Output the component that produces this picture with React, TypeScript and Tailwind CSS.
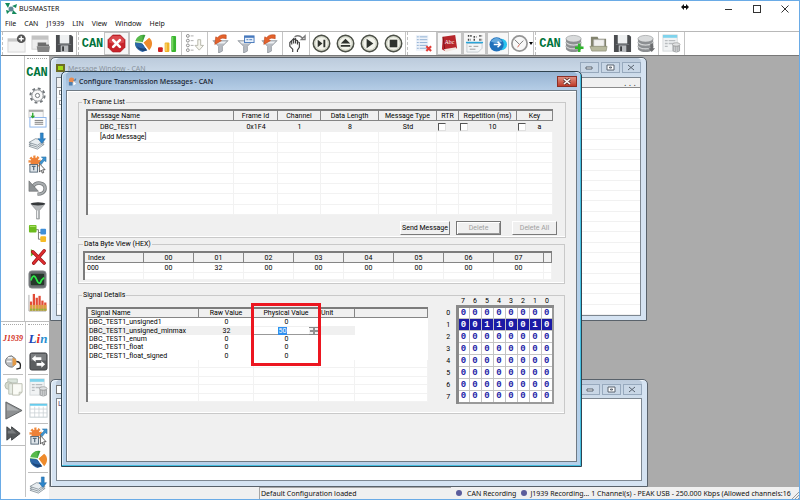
import type { ReactNode } from "react";

type IconProps = { children: ReactNode; box?: string };

const Icon = ({ children, box = "0 0 20 20" }: IconProps) => (
  <svg viewBox={box} className="h-[19px] w-[19px] shrink-0" fill="none" aria-hidden="true">
    {children}
  </svg>
);

const CanLogo = () => (
  <span className="font-['Liberation_Mono',monospace] text-[12px] leading-[20px] font-black text-[#00743c]">
    CAN
  </span>
);

const NewIcon = () => (
  <Icon>
    <rect x="1" y="5" width="18" height="14" fill="#f4f4f4" stroke="#d5d5d5" />
    <path d="M1 5h18v3H1z" fill="#c9c9c9" />
    <circle cx="15" cy="5" r="4.6" fill="#555" />
    <path d="M15 2.4v5.2M12.4 5h5.2" stroke="#fff" strokeWidth="1.5" />
  </Icon>
);

const OpenIcon = () => (
  <Icon>
    <rect x="1" y="2" width="17" height="14" fill="#ededed" stroke="#d0d0d0" />
    <path d="M1 2h17v4H1z" fill="#c3c3c3" />
    <path d="M7 9h9v2h3v2H7z" fill="#6d6d6d" />
    <path d="M6 13h14l-1 6H7z" fill="#858585" />
  </Icon>
);

const SaveIcon = () => (
  <Icon>
    <path d="M1 1h16l2 2v16H1z" fill="#4b4d50" />
    <path d="M5 1h10v9H5z" fill="#eef0f1" />
    <path d="M6 12h8v7H6z" fill="#b9bcbf" />
    <path d="M7.500 13h2v5h-2z" fill="#3b3d40" />
    <path d="M3 11h14" stroke="#74777a" />
  </Icon>
);

const StopIcon = () => (
  <Icon>
    <path d="M6 1h8l5 5v8l-5 5H6l-5-5V6z" fill="#c8242b" stroke="#a3161c" strokeWidth=".6" />
    <path d="M6 2h8l4 4v3c-5 2-11 2-16 0V6z" fill="#e35a5e" opacity=".7" />
    <path d="M6.500 6.500l7 7M13.500 6.500l-7 7" stroke="#fff" strokeWidth="2.800" strokeLinecap="round" />
  </Icon>
);

const PieIcon = () => (
  <Icon>
    <path d="M9 9L3 15a9 9 0 0 1 9-14z" fill="#3a9f39" />
    <path d="M9 9V1A9 9 0 0 0 1 10z" fill="#58bb4c" />
    <path d="M9 10L1 9c0 4 2 8 8 10l5-2z" fill="#2c66a8" />
    <path d="M3 13c2 4 6 6 11 4l-1-2c-4 1-7 0-10-2z" fill="#1b4476" />
    <path d="M10 9l6-5c4 3 4 9 0 13z" fill="#ee8b2c" />
    <path d="M9 9l7-6M9 9l6 9M9 9L1 8" stroke="#fff" />
  </Icon>
);

const BarsIcon = () => (
  <Icon>
    <rect x="0" y="14" width="5" height="5" rx="1" fill="#cf2020" />
    <rect x="7" y="9" width="5" height="10" rx="1" fill="#f0b429" />
    <rect x="14" y="2" width="5" height="17" rx="1" fill="#39b52f" />
    <path d="M15.500 3v14" stroke="#8be070" />
    <path d="M8.500 10v8" stroke="#ffe08a" />
  </Icon>
);

const ListArrowIcon = () => (
  <Icon>
    {[2, 7, 12, 17].map((y) => (
      <g key={y}>
        <circle cx="3" cy={y} r="1.500" stroke="#888" />
        <path d={`M6 ${y}h3`} stroke="#aaa" />
      </g>
    ))}
    <path d="M13.500 6h3v6h3l-4.500 5-4.500-5h3z" fill="#f6f6ee" stroke="#b5b5aa" />
  </Icon>
);

const FunnelShape = () => (
  <>
    <path d="M2 7h16l-6 6v5l-4 2v-7z" fill="#b7bcc3" stroke="#858b93" strokeWidth=".7" />
    <path d="M4 8h12l-2 2H6z" fill="#edf0f3" />
  </>
);

const FilterRunIcon = () => (
  <Icon>
    <FunnelShape />
    <path d="M16 1c-5-1-8 1-9 3L5 3l-1 8 7-4-2-1c2-2 4-2 7-1z" fill="#e5622b" stroke="#b84318" strokeWidth=".6" />
  </Icon>
);

const FilterConfigIcon = () => (
  <Icon>
    <FunnelShape />
    <rect x="9" y="2" width="10" height="7" fill="#e9f1fb" stroke="#4779bd" />
    <path d="M9 2h10v2H9z" fill="#4779bd" />
    <path d="M11 6h2m1 0h3" stroke="#4779bd" />
  </Icon>
);

const HandIcon = () => (
  <Icon>
    <path
      d="M6 19v-3l-3-3V9l2-2v4V7l2-2v5V6l2-1v5V6l2 1v4V8l2 1v5l-2 3v2"
      fill="#fff"
      stroke="#3d3d3d"
      strokeWidth="1.200"
    />
    <path d="M8 3c3-2 6-1 8 1M19 2v4h-4z" stroke="#777" strokeWidth="1.400" />
  </Icon>
);

const RoundButton = ({ d }: { d: string }) => (
  <Icon>
    <circle cx="10" cy="10" r="8.600" fill="#f3f4ec" stroke="#4d5148" strokeWidth="1.700" />
    <circle cx="10" cy="10" r="7" stroke="#c5c9b8" strokeWidth=".8" />
    <path d={d} fill="#2f332e" />
  </Icon>
);

const ClearListIcon = () => (
  <Icon>
    <rect x="2" y="1" width="13" height="17" fill="#eef3fa" />
    {[3, 6, 9, 12, 15].map((y) => (
      <path key={y} d={`M3 ${y}h2m1 0h8`} stroke="#8eaed2" />
    ))}
    <path d="M13 13l5 5m0-5l-5 5" stroke="#e23b36" strokeWidth="2.200" />
  </Icon>
);

const BookIcon = () => (
  <Icon>
    <path d="M3 3l13-2 2 14-13 3-3-2z" fill="#b6262b" />
    <path d="M4 16l13-2v2L6 19z" fill="#f1e6e0" />
    <path d="M3 3l2 13" stroke="#7d1216" />
    <text x="5" y="11" fontSize="6" fill="#fff" fontFamily="Liberation Serif, serif">
      Abc
    </text>
  </Icon>
);

const ReplayIcon = () => (
  <Icon>
    <path d="M2 10h16v5l-4 4H2z" fill="#f3f6f8" stroke="#c4cad0" />
    <path d="M3 2h4m2 1h3m3-1h3M3 6h3m3 0h2m4 0h3" stroke="#444" strokeWidth="2" strokeDasharray="1.500 1" />
    <path d="M1 9h18" stroke="#28a5da" strokeWidth="1.600" />
    <path d="M4 13h3m2 0h5M5 16h6" stroke="#9a9a9a" />
  </Icon>
);

const OnlineIcon = () => (
  <Icon>
    <circle cx="13" cy="11" r="6" fill="#2ac3ee" />
    <circle cx="8" cy="11" r="7.500" fill="#1f70bb" />
    <path d="M2 8c3-5 9-5 12 0-3 2-9 2-12 0z" fill="#63a8de" />
    <path d="M5 11h6M9 8l3 3-3 3" stroke="#fff" strokeWidth="1.600" />
  </Icon>
);

const ClockIcon = () => (
  <Icon>
    <circle cx="10" cy="10" r="8" fill="#f8f8f8" stroke="#969696" strokeWidth="1.800" />
    <path d="M5 6l5 5 4-4" stroke="#777" />
    <path d="M10 11l-2 3" stroke="#d86a5a" />
  </Icon>
);

const DiscStack = () => (
  <>
    {[14, 10, 6].map((y) => (
      <g key={y}>
        <path d={`M1 ${y - 1}v3c3 4 13 4 16 0v-3z`} fill="#8c8f92" />
        <ellipse cx="9" cy={y - 1} rx="8" ry="3.500" fill="#d9dbdc" stroke="#8a8d90" strokeWidth=".6" />
      </g>
    ))}
  </>
);

const DatabaseAddIcon = () => (
  <Icon>
    <DiscStack />
    <path d="M15 10v9M10.500 14.500h9" stroke="#2eb52c" strokeWidth="2.600" />
  </Icon>
);

const DatabaseDownIcon = () => (
  <Icon>
    <DiscStack />
    <path d="M14 10h3v5h2l-3.500 4-3.500-4h2z" fill="#6b6d6f" />
  </Icon>
);

const FolderIcon = () => (
  <Icon>
    <path d="M2 3h7l1 2h8v9H2z" fill="#83846f" />
    <path d="M5 6h11v8H5z" fill="#f0f0ee" stroke="#bbb" strokeWidth=".6" />
    <path d="M1 13h18l-1 5H3z" fill="#b7b99e" stroke="#86886f" strokeWidth=".7" />
  </Icon>
);

const TableDbIcon = () => (
  <Icon>
    <rect x="1" y="1" width="15" height="17" fill="#f1f3f4" stroke="#d5d9db" />
    <path d="M1 1h15v3H1z" fill="#7fd3ec" />
    <path d="M3 7h3m1 0h7M3 10h3m1 0h7M3 13h3" stroke="#b9bdc0" strokeWidth="1.500" />
    <path d="M11 11v7c2 2 6 2 8 0v-7z" fill="#a5a8aa" />
    <path d="M13 13v5m2-5v6m2-6v5" stroke="#d5d7d8" />
    <ellipse cx="15" cy="11" rx="4" ry="1.800" fill="#e0e2e3" stroke="#888" strokeWidth=".6" />
  </Icon>
);

const GearIcon = () => (
  <Icon>
    <circle cx="10" cy="10" r="7.500" stroke="#71767a" strokeWidth="2" strokeDasharray="3 2.900" />
    <circle cx="10" cy="10" r="6" fill="#fafafa" stroke="#71767a" strokeWidth=".9" />
    <circle cx="10" cy="10" r="2.200" fill="#fff" stroke="#71767a" />
  </Icon>
);

const MessagesIcon = () => (
  <Icon>
    <rect x="1" y="1" width="15" height="8" fill="#f7f7f7" stroke="#cfcfcf" />
    <path d="M1 1h15v2H1z" fill="#aaa" />
    <rect x="2" y="9" width="17" height="10" fill="#fff" stroke="#88b2ea" />
    <path d="M7 12h9M7 14h9M7 16h9" stroke="#777" />
    <path d="M5 4v4" stroke="#2ba52b" strokeWidth="1.400" />
    <path d="M2.500 7L5 10l2.500-3z" fill="#2ba52b" />
  </Icon>
);

const LayersIcon = () => (
  <Icon>
    {[15, 13, 11].map((y) => (
      <path key={y} d={`M1 ${y}l7-4 9 2-7 5z`} fill="#e8edf0" stroke="#7b878f" strokeWidth=".8" />
    ))}
    <path d="M13 1h3v6h2.500L14.500 12 10.500 7H13z" fill="#2d85ca" stroke="#1b5f99" strokeWidth=".5" />
  </Icon>
);

const GearLockIcon = () => (
  <Icon>
    <circle cx="7" cy="7" r="5" stroke="#f08a3c" strokeWidth="3" strokeDasharray="2.200 1.400" />
    <circle cx="7" cy="7" r="4.500" fill="#ee8138" />
    <path d="M12 8l4-4-2-2h5v5l-2-1-3 4z" fill="#3d93cf" stroke="#236b9f" strokeWidth=".5" />
    <rect x="2" y="10" width="8" height="8" fill="#dfe5ea" stroke="#586b7b" />
    <path d="M4 12h4M6 12v4" stroke="#586b7b" strokeWidth="1.300" />
    <path d="M12 9v9l2-2 1 3 1.500-.5-1-3H18z" fill="#fff" stroke="#333" strokeWidth=".8" />
  </Icon>
);

const UndoIcon = () => (
  <Icon>
    <path d="M5 9c4-6 13-4 13 2 0 4-4 6-8 6" stroke="#777b7d" strokeWidth="3.600" />
    <path d="M5 9c4-6 13-4 13 2 0 4-4 6-8 6" stroke="#aaaeb0" strokeWidth="2" />
    <path d="M1 3v11h10z" fill="#8e9294" stroke="#66696b" strokeWidth=".6" />
  </Icon>
);

const FunnelIcon = () => (
  <Icon>
    <path d="M3 3l6 7v9h3v-9l6-7z" fill="#b5b8ba" stroke="#808385" strokeWidth=".6" />
    <ellipse cx="10.500" cy="3" rx="7.500" ry="1.700" fill="#35383a" />
    <path d="M10 10v8" stroke="#f2f3f3" />
  </Icon>
);

const NodesIcon = () => (
  <Icon>
    <path d="M8 6h3v10h3M11 9h4" stroke="#777" />
    <rect x="1" y="1" width="8" height="8" rx="1" fill="#6cbc1e" />
    <rect x="13" y="5" width="6" height="6" rx="1" fill="#3f8fd8" />
    <rect x="13" y="13" width="6" height="6" rx="1" fill="#f5bb25" />
    <path d="M2 2.500h6" stroke="#b3e470" />
  </Icon>
);

const RemoveNodeIcon = () => (
  <Icon>
    <path d="M3 2l5 4-5 4z" fill="#66bb33" />
    <path d="M5 5l12 12M17 4L6 17" stroke="#981418" strokeWidth="3.600" strokeLinecap="round" />
    <path d="M5 5l12 12M17 4L6 17" stroke="#de2d2f" strokeWidth="2.200" strokeLinecap="round" />
  </Icon>
);

const SignalWatchIcon = () => (
  <Icon>
    <rect x="1" y="1" width="18" height="18" rx="3" fill="#6a6e71" stroke="#85888a" />
    <rect x="3" y="4" width="14" height="12" rx="1" fill="#26382b" />
    <path d="M3 11c2-6 4-6 6-1s4 5 5 1l3-3" stroke="#2dec48" strokeWidth="1.800" />
  </Icon>
);

const HistogramIcon = () => (
  <Icon>
    <path d="M1 2v17h18" stroke="#aaa" />
    {[
      [2, 9], [5, 1], [8, 5], [11, 3], [14, 8], [17, 10],
    ].map(([x, y]) => (
      <g key={x}>
        <path d={`M${x} 18.500V${y}h2.400V18.500z`} fill="#e24c37" />
        <path d={`M${x} 18.500v-6h2.400v6z`} fill="#dca240" />
        <path d={`M${x} 18.500v-2h2.400v2z`} fill="#8bb640" />
      </g>
    ))}
  </Icon>
);

const SwapIcon = () => (
  <Icon>
    <rect x="1" y="1" width="18" height="18" rx="2" fill="#5b5e60" stroke="#3f4143" />
    <path d="M2 2h16v7H2z" fill="#7c7f81" />
    <path d="M3 7l4-3.500v2h6v3H7v2z" fill="#fff" />
    <path d="M17 13l-4-3.500v2H8v3h5v2z" fill="#fff" />
  </Icon>
);

const TableIcon = () => (
  <Icon>
    <rect x="1" y="3" width="18" height="14" fill="#fff" stroke="#c3ccd0" />
    <path d="M1 3h18v2H1z" fill="#66cbec" />
    <path d="M1 8.500h18M1 12.500h18M6 6v11M10.500 6v11M15 6v11" stroke="#c9d0d4" strokeWidth=".8" />
  </Icon>
);

const PlugIcon = () => (
  <Icon>
    <path d="M8 4a7 6 0 1 0 1 12l3-3V7z" fill="#b7babd" stroke="#5e6163" strokeWidth=".8" />
    <path d="M4 6h5M3 10h5" stroke="#f4f4f4" strokeWidth="1.500" />
    <path d="M9 6l4 2v5l-4 2z" fill="#e49a45" />
    <path d="M13 10c4 0 5 3 4 7l-4 1" stroke="#222" strokeWidth="1.400" />
  </Icon>
);

const PagesIcon = () => (
  <Icon>
    <path d="M4 1h10v4H4z" fill="#dce5dc" stroke="#bbc4bb" />
    <circle cx="5" cy="8" r="4" fill="#d5dbd0" stroke="#b3bbae" />
    <path d="M5 6h8v11H5z" fill="#e7ece4" stroke="#b9c0b4" />
    <path d="M9 6h10v9l-3 3H9z" fill="#fafbf6" stroke="#bcbfb2" />
    <path d="M16 18v-3h3" stroke="#bcbfb2" />
  </Icon>
);

const PlayIcon = () => (
  <Icon>
    <path d="M2 1l17 9L2 19z" fill="#8d9092" stroke="#5f6264" />
    <path d="M3 3l13 7H3z" fill="#adb0b2" />
  </Icon>
);

const FastForwardIcon = () => (
  <Icon>
    <path d="M3 3l5 4V3l9 7-9 7v-4l-5 4z" fill="#56595b" stroke="#3e4143" />
    <path d="M4 7h3l1-2 5 5H4z" fill="#797c7e" />
  </Icon>
);

const AppIcon = () => (
  <svg viewBox="0 0 12 12" className="h-3 w-3" aria-hidden="true">
    <path d="M0 0h5L3 5zM12 1l-1 4-4-2zM1 7l4 1-3 3zM8 7l4 4H7z" fill="#148a5c" />
    <circle cx="6" cy="6" r="2.500" fill="#5f8796" />
  </svg>
);

const Tool = ({ label, pressed, children }: { label: string; pressed?: boolean; children: ReactNode }) => (
  <button
    aria-label={label}
    className={
      pressed
        ? "flex h-[23px] min-w-0 flex-1 items-center justify-center border border-[#c4c4c4] bg-[#f7f7f7]"
        : "flex h-[23px] min-w-0 flex-1 items-center justify-center"
    }
  >
    {children}
  </button>
);

const SideTool = ({ label, children }: { label: string; children: ReactNode }) => (
  <button aria-label={label} className="flex h-[23px] w-6 items-center justify-center">
    {children}
  </button>
);

const Grip = () => <span className="mx-px w-[2px] shrink-0 border-l border-dashed border-[#c0c0c0]" />;
const SideGrip = () => <div className="mx-[2px] mt-[2px] h-[3px] border-t border-dotted border-[#a8a8a8]" />;
const SideLine = () => <div className="mx-[2px] my-px h-px bg-[#bdbdbd]" />;

const menus = ["File", "CAN", "J1939", "LIN", "View", "Window", "Help"];

const TitleBar = () => (
  <header className="bg-white font-['Noto_Sans',sans-serif] text-[7px] leading-[10px] text-[#111]">
    <div className="flex h-4 items-center pr-[10px] pl-1">
      <AppIcon />
      <h1 className="ml-[2px]">BUSMASTER</h1>
      <svg viewBox="0 0 8 6" className="mr-9 mb-[5px] ml-auto h-[6px] w-2" aria-hidden="true">
        <path d="M0 3l3-3v2h2V0l3 3-3 3V4H3v2z" fill="#111" />
      </svg>
      <div className="flex gap-5">
        <button aria-label="Minimize" className="flex h-2 w-2 items-center">
          <span className="h-px w-[7px] bg-[#333]" />
        </button>
        <button aria-label="Maximize" className="h-2 w-2 border border-[#333]" />
        <button aria-label="Close" className="h-2 w-2">
          <svg viewBox="0 0 8 8" className="h-2 w-2" stroke="#333">
            <path d="M.5.5l7 7m0-7l-7 7" />
          </svg>
        </button>
      </div>
    </div>
    <nav className="flex h-[14px] items-center gap-2 pl-1">
      {menus.map((m) => (
        <button key={m}>{m}</button>
      ))}
    </nav>
  </header>
);

const group = "flex shrink-0 border-r border-[#c4c4c4]";

const Toolbar = () => (
  <div className="flex h-[25px] overflow-hidden border-t border-b border-t-[#b8b8b8] border-b-[#787878] bg-white">
    <div className={`${group} w-[76px]`}>
      <Grip />
      <Tool label="New"><NewIcon /></Tool>
      <Tool label="Open"><OpenIcon /></Tool>
      <Tool label="Save"><SaveIcon /></Tool>
    </div>
    <div className={`${group} w-[53px]`}>
      <Grip />
      <Tool label="CAN"><CanLogo /></Tool>
      <Tool label="Disconnect" pressed><StopIcon /></Tool>
    </div>
    <div className={`${group} w-[52px] px-[2px]`}>
      <Tool label="Bus statistics"><PieIcon /></Tool>
      <Tool label="Signal strength"><BarsIcon /></Tool>
    </div>
    <div className={`${group} w-[26px]`}>
      <Tool label="Transmit list"><ListArrowIcon /></Tool>
    </div>
    <div className={`${group} w-[75px]`}>
      <Tool label="Apply filter"><FilterRunIcon /></Tool>
      <Tool label="Configure filter"><FilterConfigIcon /></Tool>
      <Tool label="Log filter"><FilterRunIcon /></Tool>
    </div>
    <div className={`${group} w-[27px]`}>
      <Tool label="Key handler"><HandIcon /></Tool>
    </div>
    <div className={`${group} w-[96px]`}>
      <Tool label="Step"><RoundButton d="M6 6l5 4-5 4zM12 6h2v8h-2z" /></Tool>
      <Tool label="Eject"><RoundButton d="M10 5l5 5H5zM5 11.500h10v2H5z" /></Tool>
      <Tool label="Play"><RoundButton d="M7 5l7 5-7 5z" /></Tool>
      <Tool label="Stop"><RoundButton d="M6 6h8v8H6z" /></Tool>
    </div>
    <div className={`${group} w-[31px]`}>
      <Grip />
      <Tool label="Clear window"><ClearListIcon /></Tool>
    </div>
    <div className={`${group} w-[26px]`}>
      <Tool label="Interpret" pressed><BookIcon /></Tool>
    </div>
    <div className={`${group} w-[24px]`}>
      <Tool label="Overwrite" pressed><ReplayIcon /></Tool>
    </div>
    <div className={`${group} w-[47px]`}>
      <Tool label="Hex mode" pressed><OnlineIcon /></Tool>
      <Tool label="Time mode"><ClockIcon /></Tool>
      <span className="mt-[10px] h-0 border-x-2 border-t-[3px] border-x-transparent border-t-black" />
    </div>
    <div className={`${group} w-[125px]`}>
      <Grip />
      <Tool label="CAN database"><CanLogo /></Tool>
      <Tool label="Add database"><DatabaseAddIcon /></Tool>
      <Tool label="Open database"><FolderIcon /></Tool>
      <Tool label="Save database"><SaveIcon /></Tool>
      <Tool label="Import database"><DatabaseDownIcon /></Tool>
    </div>
    <div className={`${group} w-[26px]`}>
      <Tool label="Database table"><TableDbIcon /></Tool>
    </div>
  </div>
);

const Sidebar = () => (
  <aside className="w-[48px] shrink-0 bg-white">
    <div className="flex justify-end border-b border-[#bdbdbd]">
      <div className="border-l border-[#c4c4c4] pb-[7px]">
        <SideGrip />
        <SideTool label="CAN"><CanLogo /></SideTool>
        <SideTool label="Settings"><GearIcon /></SideTool>
        <SideTool label="Messages"><MessagesIcon /></SideTool>
        <SideTool label="Log"><LayersIcon /></SideTool>
        <SideTool label="Configure transmission"><GearLockIcon /></SideTool>
        <SideTool label="Replay"><UndoIcon /></SideTool>
        <SideTool label="Filter"><FunnelIcon /></SideTool>
        <SideTool label="Node simulation"><NodesIcon /></SideTool>
        <SideTool label="Remove node"><RemoveNodeIcon /></SideTool>
        <SideTool label="Signal watch"><SignalWatchIcon /></SideTool>
        <SideTool label="Signal graph"><HistogramIcon /></SideTool>
      </div>
    </div>
    <div className="flex items-start">
      <div className="w-6 border-b border-[#bdbdbd]">
        <SideGrip />
        <SideTool label="J1939">
          <span className="font-['Liberation_Serif',serif] text-[8px] leading-[20px] font-bold text-[#d22b20] italic">
            J1939
          </span>
        </SideTool>
        <SideTool label="Connect"><PlugIcon /></SideTool>
        <SideLine />
        <SideTool label="Pages"><PagesIcon /></SideTool>
        <SideTool label="Run"><PlayIcon /></SideTool>
        <SideTool label="Fast forward"><FastForwardIcon /></SideTool>
      </div>
      <div className="border-l border-[#c4c4c4]">
        <SideGrip />
        <SideTool label="LIN">
          <span className="font-['Liberation_Serif',serif] text-[13px] leading-[20px] font-bold italic">
            <span className="text-[#2049b8]">L</span>
            <span className="text-[#e02c24]">i</span>
            <span className="text-[#2a8fd0]">n</span>
          </span>
        </SideTool>
        <SideTool label="Swap"><SwapIcon /></SideTool>
        <SideLine />
        <SideTool label="LIN database"><TableDbIcon /></SideTool>
        <SideTool label="LIN table"><TableIcon /></SideTool>
        <SideLine />
        <SideTool label="LIN transmission"><GearLockIcon /></SideTool>
        <SideTool label="LIN statistics"><PieIcon /></SideTool>
        <SideLine />
        <SideTool label="LIN log"><LayersIcon /></SideTool>
      </div>
    </div>
  </aside>
);

const WindowButtons = () => (
  <div className="flex gap-[2px]">
    {[
      ["Minimize", "M6 5h6v2H6z"],
      ["Maximize", "M6 3h7v5H6zM8.500 5h2v1h-2z"],
      ["Close", "M6 3l6 5M12 3L6 8"],
    ].map(([name, d]) => (
      <button key={name} aria-label={name} className="h-[11px] w-[19px] border border-[#97a9bd] bg-[#c9d7e6]">
        <svg viewBox="0 0 19 11" className="-mt-px -ml-px h-[11px] w-[19px]" fill="#fff" stroke="#59636f">
          <path d={d} />
        </svg>
      </button>
    ))}
  </div>
);

const frame =
  "absolute flex flex-col rounded-t-[5px] border border-[#59626b] bg-[#d5e3f2] shadow-[inset_1px_1px_0_#eef5fc]";

const MessageWindow = () => (
  <section className={`${frame} top-px left-px h-[264px] w-[597px] px-[5px] pb-1`}>
    <div className="flex h-[19px] items-center rounded-t bg-linear-to-b from-[#bccbdc] to-[#d0deec]">
      <span className="h-2 w-[9px] border-2 border-[#6d6d22] bg-[#a3d916]" />
      <h2 className="mt-[3px] ml-[3px] grow font-['Noto_Sans',sans-serif] text-[7px] leading-[12px] text-[#8a939c]">
        Message Window - CAN
      </h2>
      <WindowButtons />
    </div>
    <div className="flex min-h-0 flex-1 flex-col border border-[#7d8791] bg-white">
      <div className="h-[10px] shrink-0 border-b border-[#8b8b8b] bg-[#f0f0f0] pr-1 text-right font-['Noto_Sans',sans-serif] text-[9px] leading-[9px] text-[#444]">
        . . .
      </div>
      <div className="flex min-h-0 flex-1 flex-col">
        {Array.from({ length: 22 }, (_, i) => (
          <div key={i} className="flex-1 border-b border-[#f1f1f1] pl-[2px]">
            {i < 2 && <span className="mt-[2px] block h-[5px] w-[5px] border border-[#999]" />}
          </div>
        ))}
      </div>
    </div>
  </section>
);

const TraceWindow = () => (
  <section className={`${frame} bottom-0 left-px h-[108px] w-[598px] px-[5px] pb-[5px]`}>
    <div className="flex h-[18px] items-center justify-between rounded-t bg-linear-to-b from-[#bccbdc] to-[#d0deec]">
      <span className="h-[9px] w-[9px] border border-[#777] bg-white" />
      <WindowButtons />
    </div>
    <div className="flex-1 border border-[#7d8791] bg-white pl-px font-['Noto_Sans',sans-serif] text-[7px] leading-[10px] text-[#4a2560]">
      L
    </div>
  </section>
);

const txColumns = [
  { name: "Message Name", value: "DBC_TEST1", width: "w-[146px]" },
  { name: "Frame Id", value: "0x1F4", width: "w-[44px]" },
  { name: "Channel", value: "1", width: "w-[43px]" },
  { name: "Data Length", value: "8", width: "w-[58px]" },
  { name: "Message Type", value: "Std", width: "w-[58px]" },
  { name: "RTR", value: "", width: "w-[22px]", check: true },
  { name: "Repetition (ms)", value: "10", width: "w-[58px]", check: true },
  { name: "Key", value: "a", width: "w-[36px]", check: true },
];

const th = "overflow-hidden border-r border-b border-[#858585] bg-[#f0f0f0] font-normal whitespace-nowrap";
const td = "border-r border-b border-[#f2f2f2] whitespace-nowrap";
const sunken = "border-t-2 border-l-2 border-[#7c7c7c] bg-white";

const TxFrameTable = () => (
  <div className={`${sunken} mr-3`}>
    <table className="h-[104px] w-full table-fixed border-separate border-spacing-0 text-center">
      <thead>
        <tr className="h-[10px]">
          {txColumns.map((c, i) => (
            <th key={c.name} className={`${th} ${c.width} ${i === 0 ? "pl-[3px] text-left" : ""}`}>
              {c.name}
            </th>
          ))}
        </tr>
      </thead>
      <tbody>
        <tr className="h-[11px] bg-[#f0f0f0]">
          {txColumns.map((c, i) => (
            <td key={c.name} className={i === 0 ? "pl-3 text-left" : ""}>
              {c.check ? (
                <div className="flex items-center pl-px">
                  <input
                    type="checkbox"
                    aria-label={c.name}
                    className="h-[8px] w-[8px] appearance-none border border-t-[#555] border-r-[#e0e0e0] border-b-[#e0e0e0] border-l-[#555] bg-white"
                  />
                  <span className="flex-1">{c.value}</span>
                </div>
              ) : (
                c.value
              )}
            </td>
          ))}
        </tr>
        <tr className="h-[10px]">
          <td className={`${td} pl-3 text-left`}>[Add Message]</td>
          {txColumns.slice(1).map((c) => (
            <td key={c.name} className={td} />
          ))}
        </tr>
        {Array.from({ length: 7 }, (_, r) => (
          <tr key={r} className="h-[10px]">
            {txColumns.map((c) => (
              <td key={c.name} className={td} />
            ))}
          </tr>
        ))}
      </tbody>
    </table>
  </div>
);

const bytes = ["00", "32", "00", "00", "00", "00", "00", "00"];

const ByteTable = () => (
  <div className={`${sunken} mr-3`}>
    <table className="h-[27px] w-full table-fixed border-separate border-spacing-0 text-center">
      <thead>
        <tr className="h-[10px]">
          <th className={`${th} w-[59px] pl-[3px] text-left`}>Index</th>
          {bytes.map((_, i) => (
            <th key={i} className={`${th} w-[50px]`}>0{i}</th>
          ))}
          <th className={th} />
        </tr>
      </thead>
      <tbody>
        <tr className="h-[10px]">
          <td className={`${td} pl-[2px] text-left`}>000</td>
          {bytes.map((b, i) => (
            <td key={i} className={td}>{b}</td>
          ))}
          <td className={td} />
        </tr>
        <tr className="h-[7px]">
          {Array.from({ length: 10 }, (_, i) => (
            <td key={i} className={td} />
          ))}
        </tr>
      </tbody>
    </table>
  </div>
);

const signals = [
  { name: "DBC_TEST1_unsigned1", raw: "0", physical: "0" },
  { name: "DBC_TEST1_unsigned_minmax", raw: "32", physical: "50", editing: true },
  { name: "DBC_TEST1_enum", raw: "0", physical: "0" },
  { name: "DBC_TEST1_float", raw: "0", physical: "0" },
  { name: "DBC_TEST1_float_signed", raw: "0", physical: "0" },
];

const SignalTable = () => (
  <div className={`${sunken} relative mt-2 w-[342px]`}>
    <table className="h-[93px] w-full table-fixed border-separate border-spacing-0 text-center">
      <thead>
        <tr className="h-[9px]">
          <th className={`${th} w-[111px] pl-[3px] text-left`}>Signal Name</th>
          <th className={`${th} w-[55px]`}>Raw Value</th>
          <th className={`${th} w-[65px]`}>Physical Value</th>
          <th className={`${th} w-[36px] pl-[2px] text-left`}>Unit</th>
          <th className={th} />
        </tr>
      </thead>
      <tbody>
        {signals.map((s) => (
          <tr key={s.name} className={s.editing ? "h-2 bg-[#f0f0f0]" : "h-2"}>
            <td className="pl-px text-left">{s.name}</td>
            <td>{s.raw}</td>
            <td>
              {s.editing ? (
                <div className="flex h-2 justify-between border-b border-[#999] bg-white">
                  <input
                    aria-label="Physical Value"
                    defaultValue={s.physical}
                    className="ml-6 h-2 w-[9px] bg-[#2f8ff0] text-center text-white"
                  />
                  <button aria-label="Step value" className="h-2 w-[10px] border-y border-[#888] bg-[#f0f0f0]">
                    <svg viewBox="0 0 10 6" className="h-[6px] w-[10px]" stroke="#333">
                      <path d="M1 3h8M4 1h2M4 5h2" />
                    </svg>
                  </button>
                </div>
              ) : (
                s.physical
              )}
            </td>
            <td />
            <td className="bg-white" />
          </tr>
        ))}
        {Array.from({ length: 5 }, (_, r) => (
          <tr key={r} className="h-2">
            {Array.from({ length: 5 }, (_, c) => (
              <td key={c} className={td} />
            ))}
          </tr>
        ))}
      </tbody>
    </table>
    <div className="pointer-events-none absolute -top-[6px] left-[163px] h-[63px] w-[70px] border-[3px] border-[#ec1620]" />
  </div>
);

const bitRows = [
  "00000000",
  "00110010",
  "00000000",
  "00000000",
  "00000000",
  "00000000",
  "00000000",
  "00000000",
];

const BitGrid = () => (
  <table className="mr-[10px] border-collapse text-center">
    <thead>
      <tr className="h-[6px] leading-[4px]">
        <td className="w-3" />
        {[7, 6, 5, 4, 3, 2, 1, 0].map((n) => (
          <th key={n} className="w-[12px] pb-[2px] align-top font-normal">{n}</th>
        ))}
      </tr>
    </thead>
    <tbody className="[&>tr:first-child>td]:border-t-[3px] [&>tr:first-child>td]:border-t-[#8a8a8a] [&>tr:last-child>td]:border-b-2 [&>tr:last-child>td]:border-b-[#9a9a9a]">
      {bitRows.map((row, r) => (
        <tr key={r} className="h-3">
          <th className="pr-1 font-normal">{r}</th>
          {row.split("").map((bit, c) => (
            <td
              key={c}
              className={`h-3 w-3 border border-[#c4c4c4] font-['Liberation_Mono',monospace] text-[9px] font-bold first-of-type:border-l-[3px] first-of-type:border-l-[#8a8a8a] last:border-r-2 last:border-r-[#9a9a9a] ${
                r === 1 ? "bg-[#1b1ba6] text-white" : "bg-white text-[#1b1ba6]"
              }`}
            >
              {bit}
            </td>
          ))}
        </tr>
      ))}
    </tbody>
  </table>
);

const raised = "h-[14px] border border-t-white border-r-[#7a7a7a] border-b-[#7a7a7a] border-l-white bg-[#f0f0f0]";
const box = "border border-[#c9c9c9] shadow-[inset_0_-1px_0_#fff]";

const TransmitDialog = () => (
  <section className="absolute top-[15px] left-3 flex w-[521px] flex-col rounded-t-[5px] border border-[#2f4350] bg-[#b5d0ea] px-1 pb-1 shadow-[inset_-1px_-1px_0_#45bfe0,inset_1px_1px_0_#dcebf8]">
    <div className="flex h-[18px] items-center rounded-t bg-linear-to-b from-[#97b4d3] to-[#b5cde6] pl-[2px]">
      <svg viewBox="0 0 20 20" className="h-[9px] w-[9px]" aria-hidden="true">
        <circle cx="8" cy="7" r="6" fill="#e88b4f" />
        <path d="M11 9l7-7v6zM2 11h8v8H2z" fill="#4f7fae" />
        <path d="M12 9v10l6-4z" fill="#fff" />
      </svg>
      <h2 className="ml-[2px] grow pt-[2px] font-['Noto_Sans',sans-serif] text-[7px] leading-[12px] font-medium text-[#17222e]">
        Configure Transmission Messages - CAN
      </h2>
      <button aria-label="Close dialog" className="h-[11px] w-5 border border-[#8c2f26] bg-linear-to-b from-[#dd8e81] to-[#bf3a28]">
        <svg viewBox="0 0 18 9" className="h-[9px] w-[18px]" aria-hidden="true">
          <path d="M6 2l6 5M12 2L6 7" stroke="#5b3734" strokeWidth="3" />
          <path d="M6 2l6 5M12 2L6 7" stroke="#fff" strokeWidth="1.600" />
        </svg>
      </button>
    </div>
    <div className="border border-[#6f7a84] bg-[#f0f0f0] px-[11px] pt-[7px] pb-[47px] font-['Roboto',sans-serif] text-[7px] leading-[8px] text-black shadow-[inset_1px_1px_0_#fff]">
      <fieldset className={`${box} pb-[2px] pl-[7px]`}>
        <legend className="-ml-1 px-px">Tx Frame List</legend>
        <div className="pt-[3px]">
          <TxFrameTable />
          <div className="mt-[6px] mr-2 flex justify-end">
            <button className={`${raised} w-[50px]`}>Send Message</button>
            <button disabled className="mr-[11px] ml-[6px] h-[14px] w-[45px] border border-[#777] bg-[#f0f0f0] text-[#a0a0a0] shadow-[inset_1px_1px_0_#fff,inset_-1px_-1px_0_#999]">
              Delete
            </button>
            <button disabled className={`${raised} w-[45px] text-[#a0a0a0]`}>Delete All</button>
          </div>
        </div>
      </fieldset>
      <fieldset className={`${box} mt-[2px] pt-[3px] pb-[3px] pl-1`}>
        <legend className="px-px">Data Byte View (HEX)</legend>
        <ByteTable />
      </fieldset>
      <fieldset className={`${box} mt-[7px] pb-[9px] pl-[7px]`}>
        <legend className="-ml-1 px-px">Signal Details</legend>
        <div className="flex items-start justify-between">
          <SignalTable />
          <BitGrid />
        </div>
      </fieldset>
    </div>
  </section>
);

const StatusBar = () => (
  <footer className="flex h-3 items-center overflow-hidden bg-[#f0f0f0] font-['Noto_Sans',sans-serif] text-[7px] leading-[11px] whitespace-nowrap text-[#111]">
    <div className="ml-[210px] w-[192px] shrink-0 border-t border-l border-[#a5a5a5] pl-px">Default Configuration loaded</div>
    <span className="ml-[5px] h-[6px] w-[6px] shrink-0 rounded-full bg-[#5a5c9c]" />
    <span className="ml-[5px]">CAN Recording</span>
    <span className="ml-[5px] h-[6px] w-[6px] shrink-0 rounded-full bg-[#5a5c9c]" />
    <span className="ml-[3px]">J1939 Recording...</span>
    <span className="ml-[2px]">1 Channel(s) - PEAK USB - 250.000 Kbps (Allowed channels:16</span>
    <svg viewBox="0 0 8 8" className="mt-auto ml-auto h-2 w-2 shrink-0" stroke="#999" aria-hidden="true">
      <path d="M1 8l7-7M4 8l4-4M7 8l1-1" />
    </svg>
  </footer>
);

export default function App() {
  return (
    <div className="flex min-h-screen flex-col border border-[#6aabe6] bg-white">
      <TitleBar />
      <Toolbar />
      <div className="flex flex-1">
        <Sidebar />
        <div className="flex min-w-0 flex-1 flex-col">
          <main className="relative flex-1 overflow-hidden bg-[#ababab]">
            <MessageWindow />
            <TraceWindow />
            <TransmitDialog />
          </main>
          <StatusBar />
        </div>
      </div>
    </div>
  );
}
